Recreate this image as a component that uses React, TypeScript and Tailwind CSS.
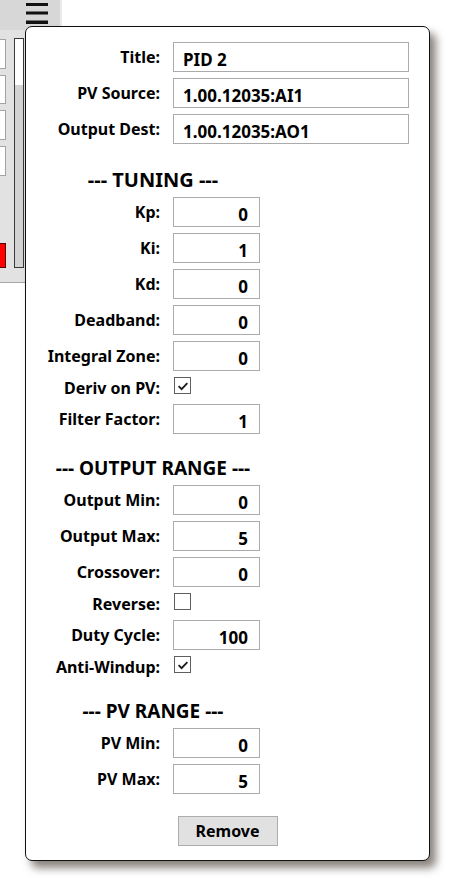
import { ReactNode } from 'react';
import clsx from 'clsx';

type RowProps = {
  label: string;
  children: ReactNode;
  check?: boolean;
};

// label column is right aligned, value column starts 13px after it
const Row = ({ label, children, check }: RowProps) => {
  return (
    <div className={clsx('flex items-center', check ? 'h-[21px]' : 'h-[30px]')}>
      <span className="w-[114px] shrink-0 text-right">{label}</span>
      <div className={clsx('ml-[13px]', check && 'self-start')}>{children}</div>
    </div>
  );
};

const TextBox = ({ value, wide }: { value: string; wide?: boolean }) => {
  return (
    <input
      readOnly
      value={value}
      className={clsx(
        'h-[30px] border border-[#ababab] bg-white pt-[5px] text-[17px] font-bold text-black outline-none',
        wide ? 'w-[236px] pl-[9px] text-left' : 'w-[87px] pr-[11px] text-right',
      )}
    />
  );
};

const CheckBox = ({ checked }: { checked?: boolean }) => {
  return (
    <span className="ml-[1px] flex h-[17px] w-[17px] items-center justify-center border border-[#5f5f5f] bg-white">
      {checked && (
        <svg viewBox="0 0 16 16" className="h-[14px] w-[14px]">
          <path d="M3 8.2 L6.4 11.6 L13 4.6" fill="none" stroke="#1c1c1c" strokeWidth="2.1" />
        </svg>
      )}
    </span>
  );
};

const Heading = ({ title, className }: { title: string; className?: string }) => {
  return <div className={clsx('w-[214px] text-center leading-[22px]', className)}>--- {title} ---</div>;
};

const SidePanel = () => {
  return (
    <div className="flex h-[283px] w-[62px] flex-col border-r-2 border-b border-r-[#ececec] border-b-[#a8a8a8] bg-[#e2e2e2]">
      <div className="flex h-[30px] shrink-0 justify-end bg-[#d7d7d7] pt-[3px] pr-[12px]">
        <svg width="22" height="21" viewBox="0 0 22 21">
          <rect x="0" y="0" width="22" height="3" fill="#111" />
          <rect x="0" y="8.5" width="22" height="3" fill="#111" />
          <rect x="0" y="17.5" width="22" height="3.5" fill="#111" />
        </svg>
      </div>
      <div className="flex flex-1 gap-[8px] pt-[8px] pb-[14px]">
        <div className="flex w-[6px] flex-col gap-[6px] pt-[1px]">
          <div className="h-[30px] border-y border-r border-[#a3a3a3] bg-white" />
          <div className="h-[29px] border-y border-r border-[#a3a3a3] bg-white" />
          <div className="h-[30px] border-y border-r border-[#a3a3a3] bg-white" />
          <div className="h-[30px] border-y border-r border-[#a3a3a3] bg-white" />
          <div className="mt-auto h-[25px] border-y border-r border-[#5a0000] bg-[#ff0000]" />
        </div>
        <div className="flex w-[10px] flex-col border border-[#3a3a3a]">
          <div className="h-[46px] bg-white" />
          <div className="flex-1 bg-[#d3d3d3]" />
        </div>
      </div>
    </div>
  );
};

export default function App() {
  return (
    <div className="relative h-[887px] w-[459px] overflow-hidden bg-white font-['Noto_Sans',sans-serif] text-[16px] font-bold text-black">
      <SidePanel />

      {/* loop settings popup */}
      <div className="absolute top-[26px] left-[25px] flex w-[405px] flex-col gap-[6px] rounded-[7px] border border-[#111] bg-white pt-[15px] pr-[20px] pb-[14px] pl-[20px] shadow-[6px_7px_9px_rgba(60,48,40,0.6)]">
        <Row label="Title:">
          <TextBox value="PID 2" wide />
        </Row>
        <Row label="PV Source:">
          <TextBox value="1.00.12035:AI1" wide />
        </Row>
        <Row label="Output Dest:">
          <TextBox value="1.00.12035:AO1" wide />
        </Row>

        <Heading title="TUNING" className="mt-[19px] text-[20px]" />
        <Row label="Kp:">
          <TextBox value="0" />
        </Row>
        <Row label="Ki:">
          <TextBox value="1" />
        </Row>
        <Row label="Kd:">
          <TextBox value="0" />
        </Row>
        <Row label="Deadband:">
          <TextBox value="0" />
        </Row>
        <Row label="Integral Zone:">
          <TextBox value="0" />
        </Row>
        <Row label="Deriv on PV:" check>
          <CheckBox checked />
        </Row>
        <Row label="Filter Factor:">
          <TextBox value="1" />
        </Row>

        <Heading title="OUTPUT RANGE" className="mt-[17px] text-[19px]" />
        <Row label="Output Min:">
          <TextBox value="0" />
        </Row>
        <Row label="Output Max:">
          <TextBox value="5" />
        </Row>
        <Row label="Crossover:">
          <TextBox value="0" />
        </Row>
        <Row label="Reverse:" check>
          <CheckBox />
        </Row>
        <Row label="Duty Cycle:">
          <TextBox value="100" />
        </Row>
        <Row label="Anti-Windup:" check>
          <CheckBox checked />
        </Row>

        <Heading title="PV RANGE" className="mt-[17px] text-[19px]" />
        <Row label="PV Min:">
          <TextBox value="0" />
        </Row>
        <Row label="PV Max:">
          <TextBox value="5" />
        </Row>

        <button className="mt-[16px] h-[30px] w-[100px] self-center border border-[#adadad] bg-[#e1e1e1] text-[16px] font-bold text-black">
          Remove
        </button>
      </div>
    </div>
  );
}
